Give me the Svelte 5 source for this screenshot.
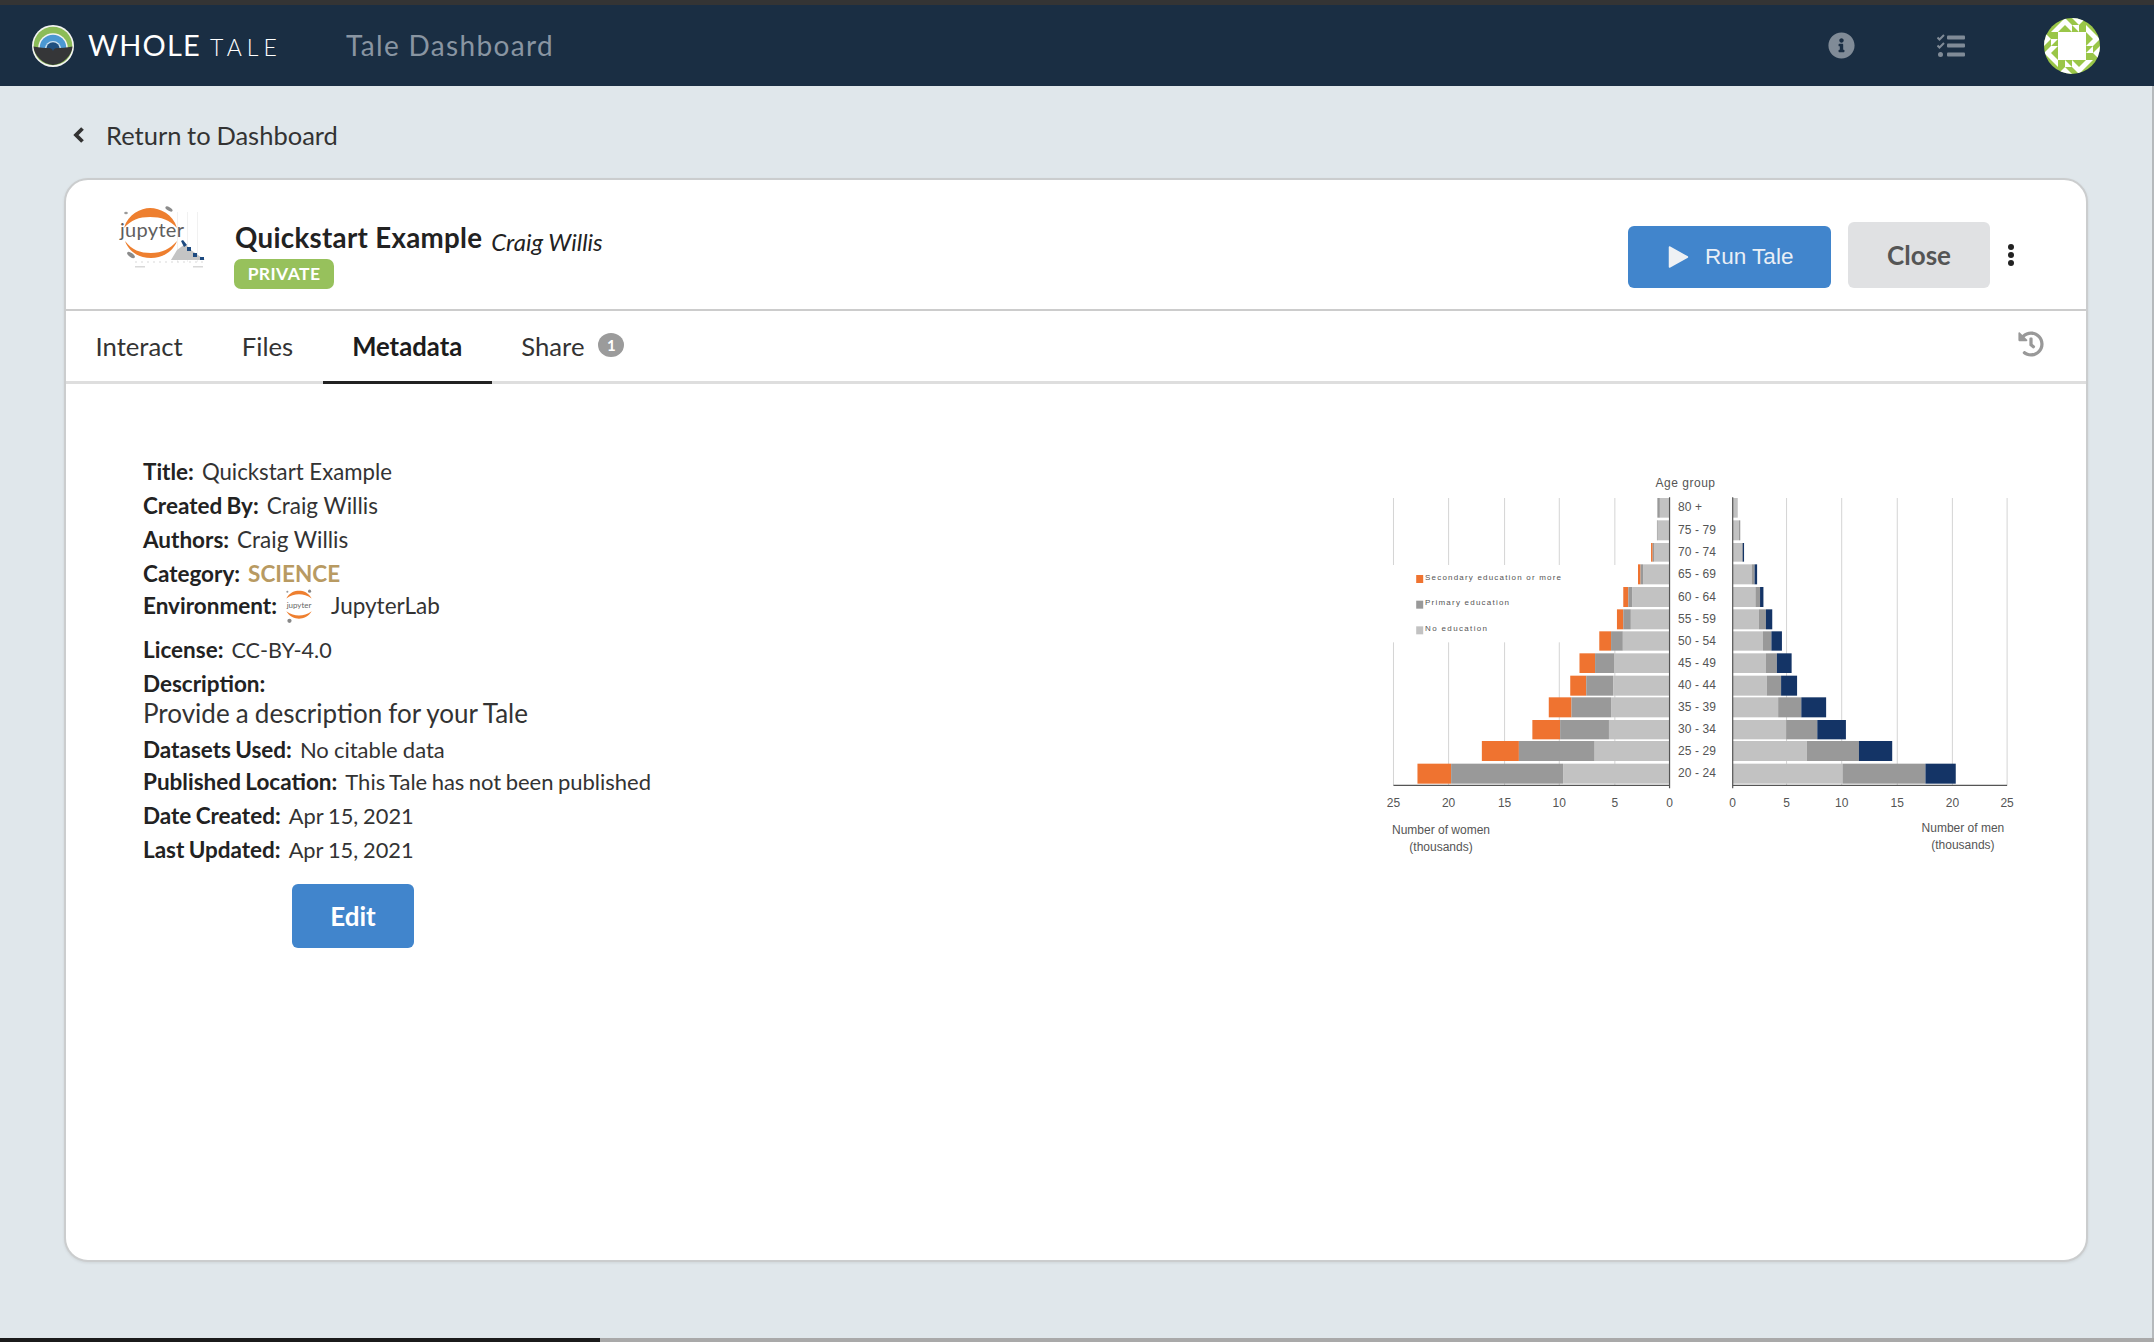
<script>
  const sx = (v) => +(v / 2.376).toFixed(2);
  const sy = (v) => +(v / 3).toFixed(2);
  const rows = [
    { t: 114, b: 173, l: [665, 659, 659], r: [850, 850, 850], age: '80 +' },
    { t: 181, b: 241, l: [660, 658, 658], r: [853, 856, 856], age: '75 - 79' },
    { t: 249, b: 305, l: [651, 648, 644], r: [860, 862, 865], age: '70 - 74' },
    { t: 313, b: 373, l: [625, 619, 613], r: [883, 890, 896], age: '65 - 69' },
    { t: 381, b: 441, l: [600, 590, 578], r: [892, 903, 911], age: '60 - 64' },
    { t: 448, b: 508, l: [596, 578, 563], r: [900, 917, 932], age: '55 - 59' },
    { t: 514, b: 572, l: [577, 549, 521], r: [910, 930, 955], age: '50 - 54' },
    { t: 580, b: 639, l: [556, 511, 474], r: [917, 943, 978], age: '45 - 49' },
    { t: 647, b: 707, l: [554, 490, 452], r: [919, 953, 991], age: '40 - 44' },
    { t: 712, b: 772, l: [549, 455, 401], r: [946, 1001, 1060], age: '35 - 39' },
    { t: 780, b: 838, l: [544, 428, 362], r: [965, 1039, 1107], age: '30 - 34' },
    { t: 843, b: 903, l: [510, 330, 242], r: [1014, 1138, 1217], age: '25 - 29' },
    { t: 911, b: 971, l: [435, 169, 89], r: [1099, 1296, 1368], age: '20 - 24' }
  ];
  const leftGrid = [32, 163, 296, 426, 558];
  const rightGrid = [966, 1097, 1229, 1360, 1490];
  const leftTicks = [[32, '25'], [163, '20'], [296, '15'], [426, '10'], [558, '5'], [688, '0']];
  const rightTicks = [[838, '0'], [966, '5'], [1097, '10'], [1229, '15'], [1360, '20'], [1490, '25']];
  const legend = [
    { y: 357, c: '#ef7330', text: 'Secondary education or more', w: 136 },
    { y: 434, c: '#999999', text: 'Primary education', w: 84 },
    { y: 511, c: '#c2c2c2', text: 'No education', w: 62 }
  ];
  const orange = '#ef7330', mid = '#999999', light = '#c2c2c2', navy = '#143466';

  const cells = [
    [0, 2, '0,0 1,1 0,1'], [0, 3, '0,0 1,0 0,1'], [1, 3, '0,0 1,0 0,1'],
    [2, 1, '0,0 1,0 0,1'], [3, 1, '0,0 1,0 1,1'], [2, 0, '0,1 1,1 1,0'],
    [3, 0, '0,0 1,1 0,1'], [1, 1, '1,0 1,1 0,1']
  ];
</script>

<div class="page">
  <div class="topstrip"></div>
  <nav class="nav">
    <svg class="logo" viewBox="0 0 42 42" aria-hidden="true">
      <circle cx="21" cy="21" r="21" fill="#f4f4f2" />
      <circle cx="21" cy="21" r="19.300" fill="#8cbc58" />
      <circle cx="21" cy="23" r="14.800" fill="#f4f4f2" />
      <circle cx="21" cy="23" r="13.300" fill="#4b98d2" />
      <circle cx="21" cy="24" r="8" fill="#cfe3f1" />
      <circle cx="21" cy="24" r="6.800" fill="#1f4f7e" />
      <path d="M1.500 21.500C8 23 13 23 17 23c2 0 3 .8 4 3 1-2.200 2-3 4-3 4 0 9 0 15.500-1.500C40 30 32 39 21 40 10 39 2 30 1.500 21.500z" fill="#353638" />
    </svg>
    <div class="brand"><span class="whole">WHOLE</span><span class="tale">TALE</span></div>
    <div class="navtitle">Tale Dashboard</div>
    <div class="navright">
      <svg class="info" viewBox="0 0 512 512" aria-hidden="true"><path fill="#808b97" d="M256 8C119.043 8 8 119.083 8 256c0 136.997 111.043 248 248 248s248-111.003 248-248C504 119.083 392.957 8 256 8zm0 110c23.196 0 42 18.804 42 42s-18.804 42-42 42-42-18.804-42-42 18.804-42 42-42zm56 254c0 6.627-5.373 12-12 12h-88c-6.627 0-12-5.373-12-12v-24c0-6.627 5.373-12 12-12h12v-64h-12c-6.627 0-12-5.373-12-12v-24c0-6.627 5.373-12 12-12h64c6.627 0 12 5.373 12 12v100h12c6.627 0 12 5.373 12 12v24z" /></svg>
      <svg class="tasks" viewBox="0 0 28 24" aria-hidden="true">
        <path d="M0.500 3.500 2.500 5.500 7 1M0.500 11.500 2.500 13.500 7 9" fill="none" stroke="#808b97" stroke-width="2" />
        <circle cx="3.500" cy="20.500" r="2.500" fill="#808b97" />
        <rect x="10" y="1.500" width="18" height="4" rx="1" fill="#808b97" />
        <rect x="10" y="9.500" width="18" height="4" rx="1" fill="#808b97" />
        <rect x="10" y="18.500" width="18" height="4" rx="1" fill="#808b97" />
      </svg>
      <svg class="avatar" viewBox="0 0 8 8" aria-hidden="true">
        <clipPath id="avatar-clip"><circle cx="4" cy="4" r="4" /></clipPath>
        <g clip-path="url(#avatar-clip)">
          <rect width="8" height="8" fill="#9ac648" />
          {#each [0, 90, 180, 270] as deg}
            <g transform="rotate({deg} 4 4)">
              {#each cells as [cx, cy, pts]}
                <polygon points={pts} fill="#ffffff" transform="translate({cx} {cy})" />
              {/each}
              <rect x="1" y="2" width="1" height="1" fill="#9ac648" />
            </g>
          {/each}
          <rect x="2" y="2" width="4" height="4" fill="#ffffff" />
        </g>
      </svg>
    </div>
  </nav>

  <main class="main">
    <div class="back">
      <svg class="chev" viewBox="0 0 12 18" aria-hidden="true"><path d="M9.500 2.500 3 9l6.500 6.500" fill="none" stroke="#333" stroke-width="3.800" /></svg>
      <span>Return to Dashboard</span>
    </div>

    <section class="card">
      <header class="head">
        <svg class="thumb" viewBox="0 0 110 80" aria-hidden="true">
          <g fill="#d6d6d6">
            <rect x="68" y="12" width="0.800" height="50" fill="#eeeeee" />
            <rect x="78" y="12" width="0.800" height="50" fill="#eeeeee" />
            <rect x="88" y="12" width="0.800" height="50" fill="#eeeeee" />
          </g>
          <path d="M62 60 L68 50 L76 44 L82 50 L96 60z" fill="#c4c4c4" />
          <path d="M72 41 L75 47 L78 45 L74 40z M78 47h4v4h-4z M84 53h4v4h-4z M91 57h4v3h-4z" fill="#1d4a80" />
          <path d="M15 28C19 14 32 8 41 8c10 0 23 6 27 20C61 20 52 17 41 17 30 17 22 20 15 28z" fill="#ee7f2f" />
          <path d="M16 41C23 50 31 53 42 53c11 0 19-4 26-12-4 11-15 17-26 17-12 0-22-6-26-17z" fill="#ee7f2f" />
          <text x="11" y="37" class="jtext">jupyter</text>
          <ellipse cx="60" cy="9" rx="4" ry="1.800" fill="#8b8b8b" transform="rotate(30 60 9)" />
          <ellipse cx="17" cy="13" rx="1.800" ry="1.200" fill="#9a9a9a" />
          <ellipse cx="22" cy="55" rx="4.500" ry="2" fill="#8b8b8b" transform="rotate(35 22 55)" />
          <path d="M26 62h68" stroke="#cfcfcf" stroke-width=".8" stroke-dasharray="2 4" />
          <rect x="26" y="66" width="10" height="1.500" fill="#d8d8d8" />
          <rect x="84" y="66" width="10" height="1.500" fill="#d8d8d8" />
        </svg>
        <div class="titles">
          <div class="titleline"><span class="title">Quickstart Example</span><span class="author">Craig Willis</span></div>
          <span class="private">PRIVATE</span>
        </div>
        <div class="actions">
          <button class="run">
            <svg class="play" viewBox="0 0 20 24" aria-hidden="true"><path d="M1 2v20l18-10z" fill="#eef1f4" stroke="#eef1f4" stroke-width="1.500" stroke-linejoin="round" /></svg>
            Run Tale
          </button>
          <button class="close">Close</button>
          <svg class="kebab" viewBox="0 0 8 24" aria-hidden="true">
            <circle cx="4" cy="4" r="3" fill="#222" /><circle cx="4" cy="12" r="3" fill="#222" /><circle cx="4" cy="20" r="3" fill="#222" />
          </svg>
        </div>
      </header>

      <div class="tabs">
        <div class="tab">Interact</div>
        <div class="tab">Files</div>
        <div class="tab active">Metadata</div>
        <div class="tab">Share<span class="badge">1</span></div>
        <svg class="history" viewBox="0 0 512 512" aria-hidden="true"><path fill="#999" d="M504 255.531c.253 136.64-111.18 248.372-247.82 248.468-59.015.042-113.223-20.53-155.822-54.911-11.077-8.94-11.905-25.541-1.839-35.607l11.267-11.267c8.609-8.609 22.353-9.551 31.891-1.984C173.062 425.135 212.781 440 256 440c101.705 0 184-82.311 184-184 0-101.705-82.311-184-184-184-48.814 0-93.149 18.969-126.068 49.932l50.754 50.754c10.08 10.08 2.941 27.314-11.313 27.314H24c-8.837 0-16-7.163-16-16V38.627c0-14.254 17.234-21.393 27.314-11.314l49.372 49.372C129.209 34.136 189.552 8 256 8c136.81 0 247.747 110.78 248 247.531zm-180.912 78.784l9.823-12.63c8.138-10.463 6.253-25.542-4.21-33.679L288 256.349V152c0-13.255-10.745-24-24-24h-16c-13.255 0-24 10.745-24 24v135.651l65.409 50.874c10.463 8.137 25.541 6.253 33.679-4.21z" /></svg>
      </div>

      <div class="content">
        <div class="meta">
          <div class="row"><b>Title:</b><span class="v-title">Quickstart Example</span></div>
          <div class="row"><b>Created By:</b><span>Craig Willis</span></div>
          <div class="row"><b>Authors:</b><span>Craig Willis</span></div>
          <div class="row r33"><b>Category:</b><span class="science">SCIENCE</span></div>
          <div class="row renv">
            <b>Environment:</b>
            <svg class="envicon" viewBox="0 0 30 34" aria-hidden="true">
              <path d="M3 10C6 4 11 2.500 15 2.500S24 4 27 10C23 7 19 6 15 6S7 7 3 10z" fill="#ee7f2f" />
              <path d="M3 22C6 27 11 29 15 29s9-2 12-7C23 25 19 26 15 26S7 25 3 22z" fill="#ee7f2f" />
              <text x="15" y="18.500" text-anchor="middle" class="envtext">jupyter</text>
              <circle cx="25" cy="3" r="1.500" fill="#888" /><circle cx="4" cy="3.500" r="1" fill="#999" /><circle cx="6" cy="31" r="2" fill="#888" />
            </svg>
            <span class="envname">JupyterLab</span>
          </div>
          <div class="row"><b>License:</b><span class="v-lic">CC-BY-4.0</span></div>
          <div class="row"><b>Description:</b></div>
          <div class="descr">Provide a description for your Tale</div>
          <div class="row r32"><b>Datasets Used:</b><span class="v-data">No citable data</span></div>
          <div class="row"><b>Published Location:</b><span class="v-pub">This Tale has not been published</span></div>
          <div class="row"><b>Date Created:</b><span class="v-date">Apr 15, 2021</span></div>
          <div class="row"><b>Last Updated:</b><span class="v-date">Apr 15, 2021</span></div>
          <button class="edit">Edit</button>
        </div>

        <svg class="chart" viewBox="0 0 660 420" aria-hidden="true">
          {#each leftGrid as x}
            <line x1={sx(x)} x2={sx(x)} y1={sy(114)} y2={sy(315)} class="grid" />
            <line x1={sx(x)} x2={sx(x)} y1={sy(547)} y2={sy(976)} class="grid" />
          {/each}
          {#each rightGrid as x}
            <line x1={sx(x)} x2={sx(x)} y1={sy(114)} y2={sy(976)} class="grid" />
          {/each}

          {#each rows as r}
            <rect x={sx(r.l[2])} y={sy(r.t)} width={sx(r.l[1] - r.l[2])} height={sy(r.b - r.t)} fill={orange} />
            <rect x={sx(r.l[1])} y={sy(r.t)} width={sx(r.l[0] - r.l[1])} height={sy(r.b - r.t)} fill={mid} />
            <rect x={sx(r.l[0])} y={sy(r.t)} width={sx(688 - r.l[0])} height={sy(r.b - r.t)} fill={light} />
            <rect x={sx(838)} y={sy(r.t)} width={sx(r.r[0] - 838)} height={sy(r.b - r.t)} fill={light} />
            <rect x={sx(r.r[0])} y={sy(r.t)} width={sx(r.r[1] - r.r[0])} height={sy(r.b - r.t)} fill={mid} />
            <rect x={sx(r.r[1])} y={sy(r.t)} width={sx(r.r[2] - r.r[1])} height={sy(r.b - r.t)} fill={navy} />
            <text x={sx(708)} y={sy((r.t + r.b) / 2) + 3.500} class="lbl" textLength={r.age.length > 4 ? 38 : 24} lengthAdjust="spacing">{r.age}</text>
          {/each}

          <line x1={sx(688)} x2={sx(688)} y1={sy(112)} y2={sy(985)} class="axis" />
          <line x1={sx(838)} x2={sx(838)} y1={sy(112)} y2={sy(985)} class="axis" />
          <line x1={sx(32)} x2={sx(688)} y1={sy(976)} y2={sy(976)} class="axis" />
          <line x1={sx(838)} x2={sx(1490)} y1={sy(976)} y2={sy(976)} class="axis" />

          {#each [...leftTicks, ...rightTicks] as [x, t]}
            <text x={sx(x)} y={sy(1026) + 4.500} text-anchor="middle" class="lbl">{t}</text>
          {/each}

          <text x={sx(726)} y={sy(68) + 4} text-anchor="middle" class="lbl" letter-spacing=".5">Age group</text>
          <text x={sx(145)} y={sy(1112) + 3} text-anchor="middle" class="lbl">Number of women</text>
          <text x={sx(145)} y={sy(1162) + 4} text-anchor="middle" class="lbl">(thousands)</text>
          <text x={sx(1385)} y={sy(1104) + 4} text-anchor="middle" class="lbl">Number of men</text>
          <text x={sx(1385)} y={sy(1155) + 4} text-anchor="middle" class="lbl">(thousands)</text>

          {#each legend as l}
            <rect x={sx(86)} y={sy(l.y - 12)} width="7" height="8" fill={l.c} />
            <text x={sx(107)} y={sy(l.y - 7) + 3} class="leg" textLength={l.w} lengthAdjust="spacing">{l.text}</text>
          {/each}
        </svg>
      </div>
    </section>
  </main>

  <div class="bottom"><div class="bl"></div><div class="br"></div></div>
</div>

<style>
  :global(body) { margin: 0; background: #e0e7eb; }
  .page {
    width: 2154px; height: 1342px; display: flex; flex-direction: column;
    font-family: Lato, "Open Sans", sans-serif; color: #333; overflow: hidden;
  }
  .topstrip { height: 5px; background: #343434; flex: none; }
  .nav {
    height: 81px; flex: none; background: #1a2e43; display: flex; align-items: center;
    padding-left: 32px; padding-right: 54px; box-sizing: border-box;
  }
  .logo { width: 42px; height: 42px; flex: none; }
  .brand { margin: 0 0 2px 14px; display: flex; align-items: baseline; color: #fff; width: 258px; flex: none; }
  .whole { font-size: 29px; font-weight: 400; letter-spacing: 1.2px; }
  .tale { font-size: 23px; font-weight: 300; letter-spacing: 5px; margin-left: 9px; }
  .navtitle { font-size: 28px; font-weight: 400; color: #8995a2; letter-spacing: 1.35px; margin-bottom: 2px; }
  .navright { margin-left: auto; display: flex; align-items: center; }
  .info { width: 27px; height: 27px; }
  .tasks { width: 28px; height: 24px; margin-left: 82px; }
  .avatar { width: 56px; height: 56px; margin-left: 79px; }

  .main { flex: 1; min-height: 0; padding-left: 64px; border-right: 2px solid #b5b9bc; }
  .back { height: 87px; padding-top: 5px; display: flex; align-items: center; font-size: 25.500px; word-spacing: -.8px; color: #333; margin-left: 9px; }
  .chev { width: 12px; height: 18px; margin-right: 21px; }

  .card {
    width: 2024px; height: 1084px; box-sizing: border-box; background: #fff;
    border: 2px solid #cbcdce; border-radius: 24px; display: flex; flex-direction: column;
    box-shadow: 0 1px 3px rgba(0, 0, 0, .08);
  }
  .head { height: 131px; box-sizing: border-box; flex: none; display: flex; align-items: flex-start; border-bottom: 2px solid #cccccc; }
  .thumb { width: 110px; height: 80px; margin: 20px 16px 0 43px; flex: none; }
  .jtext { font: 400 20px Lato, sans-serif; fill: #5e5e5e; letter-spacing: .3px; }
  .titles { margin-top: 41px; display: flex; flex-direction: column; align-items: flex-start; }
  .titleline { display: flex; align-items: flex-start; height: 34px; line-height: 34px; }
  .title { font-size: 27.700px; font-weight: 700; color: #222; letter-spacing: .3px; }
  .author { font-size: 24px; font-style: italic; margin-left: 9px; padding-top: 4px; color: #222; }
  .private {
    width: 100px; height: 30px; margin: 4px 0 0 -1px; border-radius: 7px; background: #97c15c; color: #fff;
    font-size: 17.500px; font-weight: 700; line-height: 30px; text-align: center; letter-spacing: .4px;
  }
  .actions { margin-left: auto; display: flex; align-items: flex-start; padding-top: 42px; }
  button { border: 0; padding: 0; font-family: inherit; }
  .run {
    width: 203px; height: 62px; margin-top: 4px; border-radius: 6px; background: #4185cc; color: #e9eff6;
    font: 400 22.500px "Liberation Sans", Arial, sans-serif; display: flex; align-items: center;
    padding-left: 40px; box-sizing: border-box; gap: 16px;
  }
  .play { width: 21px; height: 24px; flex: none; }
  .close { width: 142px; height: 66px; margin-left: 17px; border-radius: 6px; background: #e0e1e3; color: #555; font-size: 26px; font-weight: 700; }
  .kebab { width: 8px; height: 24px; margin: 21px 71px 0 17px; }

  .tabs { height: 73px; flex: none; display: flex; border-bottom: 3px solid #dedede; box-sizing: border-box; }
  .tab {
    padding: 0 29.500px; font-size: 25.700px; display: flex; align-items: center; color: #333;
    margin-bottom: -3px; border-bottom: 3px solid transparent; box-sizing: border-box;
  }
  .tab.active { font-weight: 700; color: #1c1c1c; border-bottom-color: #222; }
  .badge {
    width: 26px; height: 24px; border-radius: 50%; background: #9b9b9b; color: #fff; font-size: 15px; font-weight: 700;
    display: flex; align-items: center; justify-content: center; margin: -2px 0 0 14px;
  }
  .history { width: 26px; height: 26px; margin: 20px 42px 0 auto; }

  .content { display: flex; align-items: flex-start; }
  .meta { margin: 71px 0 0 77px; display: flex; flex-direction: column; align-items: flex-start; }
  .row { height: 34px; line-height: 34px; display: flex; font-size: 22.500px; color: #333; white-space: nowrap; }
  .row.r33 { height: 33px; }
  .row.r32 { height: 32px; }
  .row b { color: #222; margin-right: 8px; font-weight: 700; word-spacing: -1.200px; }
  .renv { height: 44px; margin-top: -1px; }
  .science { color: #b89a62; font-weight: 700; }
  .v-title { font-size: 22.200px; }
  .v-lic { font-size: 21.600px; }
  .v-data { font-size: 22px; word-spacing: -.5px; }
  .v-pub { font-size: 22px; word-spacing: -1.200px; }
  .v-date { font-size: 21.800px; word-spacing: -.7px; }
  .envicon { width: 32px; height: 36px; margin: -1px 16px 0 -2px; }
  .envtext { font: 400 7.500px Lato, sans-serif; fill: #666; }
  .descr { height: 32px; line-height: 24px; font-size: 26px; word-spacing: -.5px; color: #333; white-space: nowrap; }
  .edit {
    width: 122px; height: 64px; margin: 17px 0 0 149px; border-radius: 6px; background: #4185cc; color: #fff;
    font-size: 26px; font-weight: 700;
  }

  .chart { width: 660px; height: 420px; margin: 76px 46px 0 auto; flex: none; }
  .grid { stroke: #d4d4d4; stroke-width: 1; }
  .axis { stroke: #555; stroke-width: 1.200; }
  .lbl { font: 400 12px "Liberation Sans", Arial, sans-serif; fill: #555; }
  .leg { font: 400 8px "Liberation Sans", Arial, sans-serif; fill: #555; }

  .bottom { height: 4px; flex: none; display: flex; }
  .bl { width: 600px; background: #1b1b1b; }
  .br { flex: 1; background: #a9a9a9; }
</style>
